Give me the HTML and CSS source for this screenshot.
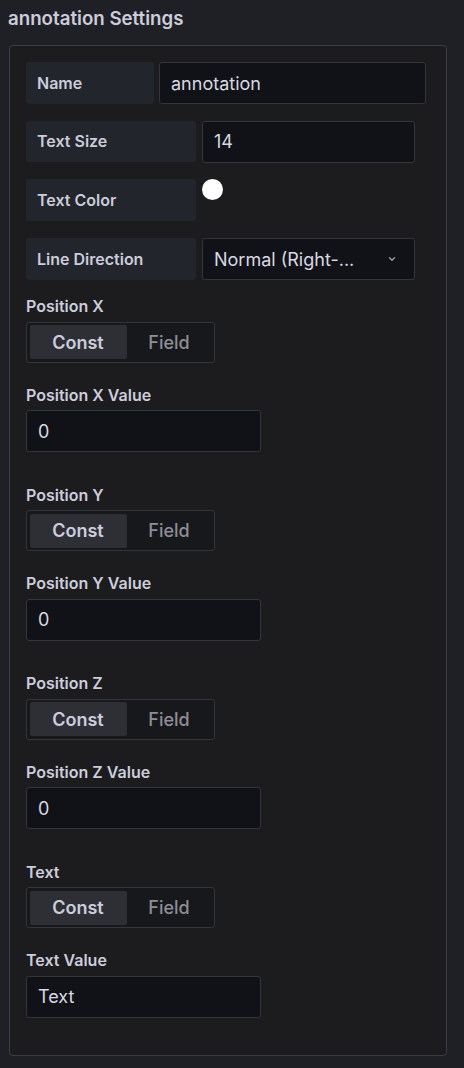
FILE: index.html
```html
<!DOCTYPE html>
<html>
<head>
<meta charset="utf-8">
<link rel="stylesheet" href="styles.css">
</head>
<body>
<h2 class="title">annotation Settings</h2>
<div class="panel">
  <div class="inline-row">
    <div class="inline-label w-name">Name</div>
    <div class="input w-name-input">annotation</div>
  </div>
  <div class="inline-row">
    <div class="inline-label w-wide">Text Size</div>
    <div class="input w-mid">14</div>
  </div>
  <div class="inline-row">
    <div class="inline-label w-wide">Text Color</div>
    <div class="swatch-cell"><span class="swatch"></span></div>
  </div>
  <div class="inline-row last">
    <div class="inline-label w-wide">Line Direction</div>
    <div class="input select w-mid">
      <span class="select-value">Normal (Right-...</span>
      <svg class="chevron" width="12" height="12" viewBox="0 0 12 12"><path d="M3.5 4.8 L6 7.2 L8.5 4.8" fill="none" stroke="#9fa0a8" stroke-width="1.3" stroke-linecap="round" stroke-linejoin="round"/></svg>
    </div>
  </div>

  <div class="field radio-field">
    <div class="field-label">Position X</div>
    <div class="radio-group"><span class="radio active">Const</span><span class="radio">Field</span></div>
  </div>
  <div class="field value-field">
    <div class="field-label">Position X Value</div>
    <div class="input w-value">0</div>
  </div>

  <div class="field radio-field">
    <div class="field-label">Position Y</div>
    <div class="radio-group"><span class="radio active">Const</span><span class="radio">Field</span></div>
  </div>
  <div class="field value-field">
    <div class="field-label">Position Y Value</div>
    <div class="input w-value">0</div>
  </div>

  <div class="field radio-field">
    <div class="field-label">Position Z</div>
    <div class="radio-group"><span class="radio active">Const</span><span class="radio">Field</span></div>
  </div>
  <div class="field value-field">
    <div class="field-label">Position Z Value</div>
    <div class="input w-value">0</div>
  </div>

  <div class="field radio-field">
    <div class="field-label">Text</div>
    <div class="radio-group"><span class="radio active">Const</span><span class="radio">Field</span></div>
  </div>
  <div class="field value-field final">
    <div class="field-label">Text Value</div>
    <div class="input w-value">Text</div>
  </div>
</div>
</body>
</html>
```
FILE: styles.css
```css
* { box-sizing: border-box; }
html, body { margin: 0; padding: 0; }
body {
  background: #1f2025;
  font-family: Inter, "Noto Sans", sans-serif;
  color: #ccccdc;
  width: 464px;
  height: 1068px;
  overflow: hidden;
}
.title {
  margin: 8px 0 0 8px;
  font-size: 18.7px;
  line-height: 22px;
  font-weight: 600;
  color: #ccccdc;
}
.panel {
  margin: 15px 17px 0 9px;
  background: #1c1c1e;
  border: 1px solid #3c3c42;
  border-radius: 4px;
  padding: 16px 16px 37px 16px;
}
.inline-row {
  display: flex;
  align-items: flex-start;
  height: 42px;
  margin-bottom: 16.7px;
}
.inline-row.last { margin-bottom: 17px; }
.inline-label {
  background: #22252b;
  border-radius: 3px;
  height: 41.5px;
  display: flex;
  align-items: center;
  padding-left: 11px;
  font-size: 16px;
  font-weight: 600;
  color: #ccccdc;
}
.w-name { width: 128px; margin-right: 5px; }
.w-wide { width: 170px; margin-right: 6px; }
.input {
  background: #111217;
  border: 1px solid #34353b;
  border-radius: 3px;
  height: 42px;
  display: flex;
  align-items: center;
  padding-left: 11px;
  font-size: 18px;
  color: #d8d9e3;
}
.w-name-input { width: 267px; }
.w-mid { width: 213px; }
.w-value { width: 235px; }
.swatch-cell { height: 42px; }
.swatch {
  display: block;
  width: 21px;
  height: 21px;
  border-radius: 50%;
  background: #ffffff;
}
.select { justify-content: space-between; padding-right: 16px; }
.chevron { display: block; }
.field-label {
  font-size: 16px;
  line-height: 18px;
  font-weight: 600;
  color: #ccccdc;
  margin-bottom: 6.5px;
}
.radio-field { margin-bottom: 23px; }
.value-field { margin-bottom: 33.5px; }
.value-field.final { margin-bottom: 0; }
.radio-group {
  display: flex;
  width: 189px;
  height: 41px;
  padding: 2.5px;
  border: 1px solid #34353b;
  border-radius: 3px;
  background: #17181c;
}
.radio {
  flex: 1;
  display: flex;
  align-items: center;
  justify-content: center;
  font-size: 18px;
  font-weight: 500;
  color: #8e8e96;
  border-radius: 2px;
}
.radio.active {
  flex: 0 0 97px;
  background: #2e2f35;
  color: #ccccdc;
  font-weight: 600;
}
```
